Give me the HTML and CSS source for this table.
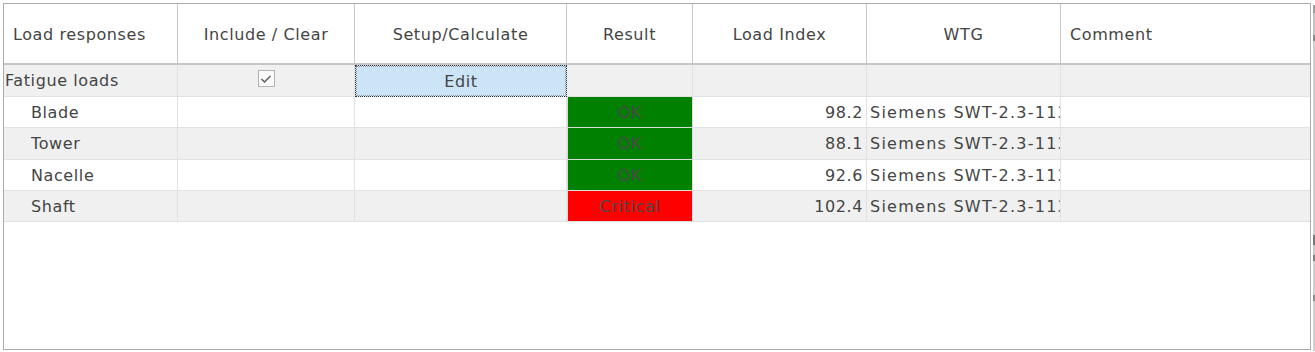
FILE: index.html
```html
<!DOCTYPE html>
<html>
<head>
<meta charset="utf-8">
<link rel="stylesheet" href="styles.css">
</head>
<body>
<div class="page">
  <div class="grid">
    <div class="hd left">Load responses</div>
    <div class="hd">Include / Clear</div>
    <div class="hd">Setup/Calculate</div>
    <div class="hd">Result</div>
    <div class="hd">Load Index</div>
    <div class="hd">WTG</div>
    <div class="hd left last">Comment</div>

    <div class="c alt r1 group">Fatigue loads</div>
    <div class="c alt r1 center"><span class="chk"><svg width="12" height="10" viewBox="0 0 12 10"><path d="M1.5 5 L4.5 8 L10.5 2" fill="none" stroke="#5e5e5e" stroke-width="1.5"/></svg></span></div>
    <div class="c r1 edit">Edit</div>
    <div class="c alt r1"></div>
    <div class="c alt r1"></div>
    <div class="c alt r1"></div>
    <div class="c alt r1 last"></div>

    <div class="c r2 sub">Blade</div>
    <div class="c r2"></div>
    <div class="c r2"></div>
    <div class="c r2 res ok">OK</div>
    <div class="c r2 num">98.2</div>
    <div class="c r2 wtg">Siemens SWT-2.3-113</div>
    <div class="c r2 last"></div>

    <div class="c alt r1 sub">Tower</div>
    <div class="c alt r1"></div>
    <div class="c alt r1"></div>
    <div class="c alt r1 res ok">OK</div>
    <div class="c alt r1 num">88.1</div>
    <div class="c alt r1 wtg">Siemens SWT-2.3-113</div>
    <div class="c alt r1 last"></div>

    <div class="c r2 sub">Nacelle</div>
    <div class="c r2"></div>
    <div class="c r2"></div>
    <div class="c r2 res ok">OK</div>
    <div class="c r2 num">92.6</div>
    <div class="c r2 wtg">Siemens SWT-2.3-113</div>
    <div class="c r2 last"></div>

    <div class="c alt r2 sub">Shaft</div>
    <div class="c alt r2"></div>
    <div class="c alt r2"></div>
    <div class="c alt r2 res crit">Critical</div>
    <div class="c alt r2 num">102.4</div>
    <div class="c alt r2 wtg">Siemens SWT-2.3-113</div>
    <div class="c alt r2 last"></div>
  </div>
  <div class="edge"></div>
</div>
</body>
</html>
```
FILE: styles.css
```css
html, body {
  margin: 0;
  padding: 0;
  background: #ffffff;
}
body {
  font-family: "DejaVu Sans", Verdana, sans-serif;
  font-size: 16px;
  letter-spacing: 0.6px;
  color: #444444;
}
.page {
  display: flex;
  align-items: flex-start;
  gap: 2px;
  padding: 3px 0 0 3px;
  height: 349px;
}
.grid {
  box-sizing: border-box;
  width: 1308px;
  height: 347px;
  border: 1px solid #ababab;
  display: grid;
  grid-template-columns: 174px 177px 212px 126px 174px 194px 1fr;
  grid-template-rows: 61px 32px 31px 32px 31px 31px;
  align-content: start;
  background: #ffffff;
}
.edge {
  width: 2px;
  height: 346px;
  margin-top: 2px;
  background: linear-gradient(#9c9c9c 0 8px, #c4c4c4 8px 30px, #8a8a8a 30px 36px, #cfcfcf 36px 230px, #7a7a7a 230px 240px, #c8c8c8 240px 250px, #808080 250px 256px, #cfcfcf 256px 290px, #8c8c8c 290px 296px, #d0d0d0 296px);
}
.hd {
  box-sizing: border-box;
  border-right: 1px solid #c9c9c9;
  border-bottom: 2px solid #c6c6c6;
  display: flex;
  align-items: center;
  justify-content: center;
  padding-top: 2px;
  white-space: nowrap;
}
.hd.left {
  justify-content: flex-start;
  padding-left: 9px;
}
.hd.last, .c.last {
  border-right: none;
}
.c {
  box-sizing: border-box;
  border-right: 1px solid #e2e2e2;
  border-bottom: 1px solid #e2e2e2;
  display: flex;
  align-items: center;
  white-space: nowrap;
  overflow: hidden;
  background: #ffffff;
}
.c.alt {
  background: #f0f0f0;
}
.c.group {
  padding-left: 1px;
}
.c.sub {
  padding-left: 27px;
}
.c.center {
  justify-content: center;
}
.c.num {
  justify-content: flex-end;
  padding-right: 3px;
}
.c.wtg {
  padding-left: 3px;
  letter-spacing: 1.25px;
  text-overflow: clip;
}
.c.res {
  justify-content: center;
  border: 1px solid #dcdcdc;
  border-top: none;
  color: #4a4a4a;
}
.c.ok {
  background: #008000;
}
.c.crit {
  background: #ff0000;
}
.c.edit {
  justify-content: center;
  background: #cce4f7;
  border: 1px dotted #333333;
  outline: 1px dotted #999999;
  outline-offset: -2px;
}
.chk {
  box-sizing: border-box;
  width: 17px;
  height: 17px;
  margin-top: -4px;
  border: 1px solid #b3b3b3;
  background: #fafafa;
  display: flex;
  align-items: center;
  justify-content: center;
}
```
